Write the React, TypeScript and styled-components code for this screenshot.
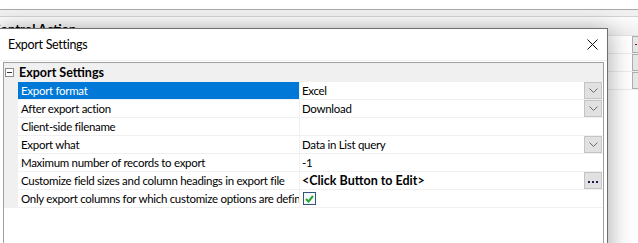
import React from 'react';
import styled, { createGlobalStyle } from 'styled-components';

const FONT = `Lato, "Noto Sans", sans-serif`;

const Global = createGlobalStyle`
  html, body { margin: 0; padding: 0; background: #fff; overflow: hidden; }
  body { font-family: ${FONT}; }
`;

const Screen = styled.div`
  position: relative;
  width: 638px;
  height: 243px;
  overflow: hidden;
  background: #fff;
`;

/* ---------- background window ---------- */
const BgWindow = styled.div`
  display: flex;
  flex-direction: column;
  width: 100%;
  height: 100%;
`;
const BgTop = styled.div`
  height: 9px;
  background: #fff;
  border-bottom: 1px solid #a8a8a8;
`;
const BgBand = styled.div`
  height: 6px;
  background: #f0f0f0;
  border-bottom: 1px solid #d2d2d2;
`;
const BgHeader = styled.div`
  height: 19px;
  background: linear-gradient(#fcfcfc, #eeeeee);
  border-bottom: 1px solid #e2e2e2;
  font-family: ${FONT};
  font-weight: bold;
  font-size: 13px;
  line-height: 16px;
  padding-top: 4px;
  box-sizing: border-box;
  white-space: nowrap;
`;
const HeaderText = styled.span`
  margin-left: -8px;
`;
const BgRow = styled.div`
  height: 17px;
  border-bottom: 1px solid #ececec;
  display: flex;
  justify-content: flex-end;
  align-items: center;
`;
const MiniButton = styled.div<{ $mark?: boolean }>`
  width: 14px;
  height: 15px;
  margin-right: -10px;
  background: #e6e6e6;
  border: 1px solid #adadad;
  position: relative;
  &::after {
    content: '';
    display: ${(p) => (p.$mark ? 'block' : 'none')};
    position: absolute;
    left: 2px;
    top: 7px;
    width: 2px;
    height: 1px;
    background: #7a1a1a;
  }
`;

/* ---------- dialog ---------- */
const Dialog = styled.div`
  position: absolute;
  left: -1px;
  top: 28px;
  width: 609px;
  height: 240px;
  box-sizing: border-box;
  background: #fff;
  border: 1px solid #6e6e6e;
  box-shadow: 2px 2px 22px rgba(0, 0, 0, 0.32);
  display: flex;
  flex-direction: column;
`;
const TitleBar = styled.div`
  height: 31px;
  display: flex;
  align-items: center;
  justify-content: space-between;
  padding: 0 9px 0 8px;
  border-bottom: 1px solid #f0f0f0;
  color: #000;
`;
const TitleText = styled.span`
  font-family: ${FONT};
  font-size: 12.5px;
  letter-spacing: -0.3px;
`;
const Body = styled.div`
  flex: 1;
  padding: 1px 3px 0 3px;
  display: flex;
  flex-direction: column;
`;
const Grid = styled.div`
  flex: 1;
  border: 1px solid #a0a0a0;
  border-bottom: none;
  display: flex;
  flex-direction: column;
  font-size: 11.5px;
  letter-spacing: -0.3px;
  color: #000;
`;
const Category = styled.div`
  height: 19px;
  background: #f0f0f0;
  display: flex;
  align-items: center;
  font-weight: bold;
  font-size: 12.5px;
  letter-spacing: 0;
`;
const Collapse = styled.div`
  width: 7px;
  height: 7px;
  margin: 0 5px 0 1px;
  border: 1px solid #8c8c8c;
  background: #fff;
  position: relative;
  &::after {
    content: '';
    position: absolute;
    left: 1px;
    top: 3px;
    width: 5px;
    height: 1px;
    background: #333;
  }
`;
const Row = styled.div`
  display: flex;
  height: 18px;
`;
const Gutter = styled.div`
  width: 14px;
  background: #f0f0f0;
`;
const Label = styled.div<{ $selected?: boolean }>`
  width: 282px;
  padding-left: 3px;
  box-sizing: border-box;
  border-right: 1px solid #f0f0f0;
  border-bottom: 1px solid #f0f0f0;
  background: ${(p) => (p.$selected ? '#0078d7' : '#fff')};
  color: ${(p) => (p.$selected ? '#fff' : '#000')};
  line-height: 17px;
  white-space: nowrap;
  overflow: hidden;
`;
const Value = styled.div<{ $bold?: boolean }>`
  flex: 1;
  display: flex;
  align-items: flex-start;
  border-bottom: 1px solid #f0f0f0;
  padding-left: 2px;
  font-weight: ${(p) => (p.$bold ? 'bold' : 'normal')};
  font-size: ${(p) => (p.$bold ? '12.5px' : '11.5px')};
  letter-spacing: ${(p) => (p.$bold ? '0' : '-0.3px')};
  line-height: 17px;
  white-space: nowrap;
`;
const ValueText = styled.span`
  flex: 1;
`;
const DropButton = styled.div`
  width: 16px;
  height: 15px;
  margin-right: 1px;
  background: #e1e1e1;
  border: 1px solid #c4c4c4;
  display: flex;
  align-items: center;
  justify-content: center;
`;
const EllipsisButton = styled(DropButton)`
  gap: 2px;
  padding-top: 2px;
  box-sizing: content-box;
  height: 13px;
`;
const Dot = styled.span`
  width: 2px;
  height: 2px;
  background: #2a1450;
`;
const CheckBox = styled.div`
  width: 11px;
  height: 11px;
  margin: 2px 0 0 1px;
  border: 1px solid #33557a;
  background: #f4f8fb;
  display: flex;
  align-items: center;
  justify-content: center;
`;
const Filler = styled.div`
  flex: 1;
`;

const Chevron = () => (
  <svg width="9" height="5" viewBox="0 0 9 5">
    <polyline points="0.5,0.5 4.5,4.5 8.5,0.5" fill="none" stroke="#6a6a6a" strokeWidth="1" />
  </svg>
);

const CloseIcon = () => (
  <svg width="11" height="11" viewBox="0 0 11 11">
    <path d="M0.5 0.5 L10.5 10.5 M10.5 0.5 L0.5 10.5" stroke="#111" strokeWidth="1" />
  </svg>
);

const Check = () => (
  <svg width="9" height="8" viewBox="0 0 9 8">
    <polyline points="1,4 3.5,6.5 8,1" fill="none" stroke="#2aa52a" strokeWidth="2" />
  </svg>
);

type Prop = {
  label: string;
  value?: string;
  kind?: 'drop' | 'edit' | 'check' | 'text';
  selected?: boolean;
};

const props: Prop[] = [
  { label: 'Export format', value: 'Excel', kind: 'drop', selected: true },
  { label: 'After export action', value: 'Download', kind: 'drop' },
  { label: 'Client-side filename', value: '', kind: 'text' },
  { label: 'Export what', value: 'Data in List query', kind: 'drop' },
  { label: 'Maximum number of records to export', value: '-1', kind: 'text' },
  { label: 'Customize field sizes and column headings in export file', value: '<Click Button to Edit>', kind: 'edit' },
  { label: 'Only export columns for which customize options are defined', kind: 'check' },
];

export default function App() {
  return (
    <Screen>
      <Global />
      <BgWindow>
        <BgTop />
        <BgBand />
        <BgHeader>
          <HeaderText>Control Action</HeaderText>
        </BgHeader>
        <BgRow><MiniButton $mark /></BgRow>
        <BgRow><MiniButton /></BgRow>
        <BgRow><MiniButton /></BgRow>
      </BgWindow>
      <Dialog>
        <TitleBar>
          <TitleText>Export Settings</TitleText>
          <CloseIcon />
        </TitleBar>
        <Body>
          <Grid>
            <Category>
              <Collapse />
              Export Settings
            </Category>
            {props.map((p) => (
              <Row key={p.label}>
                <Gutter />
                <Label $selected={p.selected}>{p.label}</Label>
                <Value $bold={p.kind === 'edit'}>
                  {p.kind === 'check' ? (
                    <CheckBox>
                      <Check />
                    </CheckBox>
                  ) : (
                    <ValueText>{p.value}</ValueText>
                  )}
                  {p.kind === 'drop' && (
                    <DropButton>
                      <Chevron />
                    </DropButton>
                  )}
                  {p.kind === 'edit' && (
                    <EllipsisButton>
                      <Dot />
                      <Dot />
                      <Dot />
                    </EllipsisButton>
                  )}
                </Value>
              </Row>
            ))}
            <Filler />
          </Grid>
        </Body>
      </Dialog>
    </Screen>
  );
}
